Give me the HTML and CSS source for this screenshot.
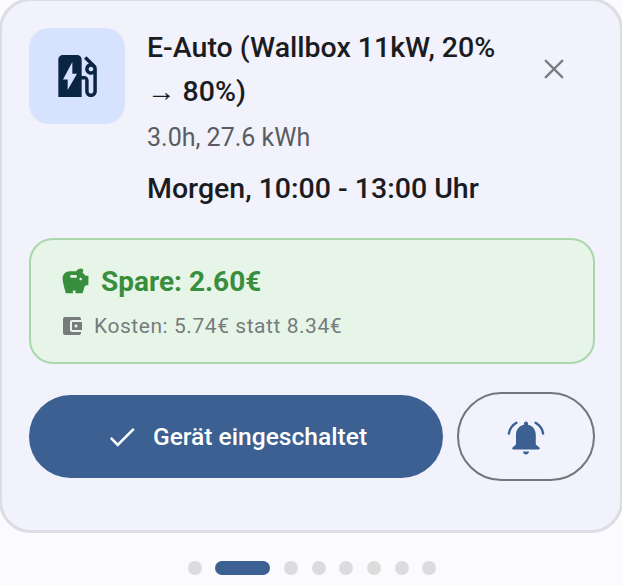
FILE: index.html
```html
<!DOCTYPE html>
<html>
  <head>
    <title>Tipp</title>
    <link rel="stylesheet" href="styles.css">
  </head>

  <body>
    <div class="card">
      <div class="top-row">
        <div class="device-icon">
          <svg viewBox="0 0 24 24" width="56" height="56"><path d="M19.77 7.23l.01-.01-3.72-3.72L15 4.56l2.11 2.11c-.94.36-1.61 1.26-1.61 2.33 0 1.38 1.12 2.5 2.5 2.5.36 0 .69-.08 1-.21v7.21c0 .55-.45 1-1 1s-1-.45-1-1V14c0-1.1-.9-2-2-2h-1V5c0-1.1-.9-2-2-2H6c-1.1 0-2 .9-2 2v16h10v-7.5h1.5v5c0 1.38 1.12 2.5 2.5 2.5s2.5-1.12 2.5-2.5V9c0-.69-.28-1.32-.73-1.77zM18 10c-.55 0-1-.45-1-1s.45-1 1-1 1 .45 1 1-.45 1-1 1zM8 18v-4.5H6L10 6v5h2l-4 7z"/></svg>
        </div>
        <div class="device-text">
          <div class="title">E-Auto (Wallbox 11kW, 20% → 80%)</div>
          <div class="sub">3.0h, 27.6 kWh</div>
          <div class="time">Morgen, 10:00 - 13:00 Uhr</div>
        </div>
        <svg class="close" viewBox="0 0 24 24" width="34" height="34"><path d="M5.7 5.7L18.3 18.3M18.3 5.7L5.7 18.3"/></svg>
      </div>

      <div class="savings">
        <div class="savings-main">
          <svg viewBox="0 0 24 24" width="31" height="31"><path fill-rule="evenodd" d="M15 10c0-.55.45-1 1-1s1 .45 1 1-.45 1-1 1-1-.45-1-1zM8 9h5V7H8v2zm14-1.5v6.97l-2.82.94L17.5 21H12v-2h-2v2H4.5S2 12.54 2 9.5 4.46 4 7.5 4h5c.91-1.21 2.36-2 4-2 .83 0 1.5.67 1.5 1.5 0 .21-.04.4-.12.58-.14.34-.26.73-.32 1.15L19.83 7.5H22z"/></svg>
          <span>Spare: 2.60€</span>
        </div>
        <div class="savings-cost">
          <svg viewBox="0 0 24 24" width="24" height="24"><path d="M21 18v1c0 1.1-.9 2-2 2H5c-1.11 0-2-.9-2-2V5c0-1.1.89-2 2-2h14c1.1 0 2 .9 2 2v1h-9c-1.11 0-2 .9-2 2v8c0 1.1.89 2 2 2h9zm-9-2h10V8H12v8zm4-2.5c-.83 0-1.5-.67-1.5-1.5s.67-1.5 1.5-1.5 1.5.67 1.5 1.5-.67 1.5-1.5 1.5z"/></svg>
          <span>Kosten: 5.74€ statt 8.34€</span>
        </div>
      </div>

      <div class="actions">
        <button class="btn-main">
          <svg viewBox="0 0 24 24" width="34" height="34"><path d="M4.1 12.7L9 17.6L20.3 6.3"/></svg>
          Gerät eingeschaltet
        </button>
        <button class="btn-bell">
          <svg viewBox="0 0 42 42" width="42" height="42">
            <path d="M21 5.5c1.1 0 2 .9 2 2v1.2c4.8 1 7.8 5 7.8 10.3v9.5l3.6 2.9c.8.7.4 2.1-.8 2.1H8.4c-1.2 0-1.6-1.4-.8-2.1l3.4-2.9V19c0-5.3 3-9.3 8-10.3V7.5c0-1.1.9-2 2-2zM18 35.6h6c0 1.6-1.3 2.9-3 2.9s-3-1.3-3-2.9z"/>
            <path class="bell-arc" d="M3.9 17.6C4.6 13 7.3 9.2 11.4 6.8M38.1 17.6C37.4 13 34.7 9.2 30.6 6.8"/>
          </svg>
        </button>
      </div>
    </div>

    <div class="dots">
      <span class="dot"></span>
      <span class="dot active"></span>
      <span class="dot"></span>
      <span class="dot"></span>
      <span class="dot"></span>
      <span class="dot"></span>
      <span class="dot"></span>
      <span class="dot"></span>
    </div>
  </body>
</html>
```

FILE: styles.css
```css
body {
  margin: 0;
  height: 586px;
  overflow: hidden;
  background: #fbfaff;
  font-family: Roboto, "Liberation Sans", sans-serif;
  color: #1b1c22;
}

svg {
  display: block;
  flex-shrink: 0;
}

.card {
  box-sizing: border-box;
  height: 535px;
  margin: -2px -1px 0;
  padding: 27px 25px 0 27px;
  background: #f1f2fb;
  border: 3px solid #dcdde3;
  border-radius: 32px;
}

.top-row {
  display: flex;
  align-items: flex-start;
  height: 210px;
}

.device-icon {
  width: 96px;
  height: 96px;
  display: flex;
  align-items: center;
  justify-content: center;
  flex-shrink: 0;
  background: #d7e3fe;
  border-radius: 20px;
}

.device-icon path {
  fill: #0c2444;
}

.device-text {
  width: 370px;
  flex-shrink: 0;
  margin: -2px 0 0 22px;
}

.title {
  font-size: 28.5px;
  font-weight: 500;
  line-height: 44px;
}

.sub {
  margin-top: 7px;
  font-size: 25px;
  line-height: 34px;
  color: #5a5c62;
}

.time {
  margin-top: 17px;
  font-size: 28.5px;
  font-weight: 500;
  line-height: 34px;
}

.close {
  margin: 24px 0 0 20px;
}

.close path {
  fill: none;
  stroke: #7b7c82;
  stroke-width: 1.6;
}

.savings {
  box-sizing: border-box;
  height: 126px;
  padding: 25px 29px 0;
  background: #e7f5e9;
  border: 2.5px solid #a9d8ab;
  border-radius: 24px;
}

.savings-main {
  display: flex;
  align-items: center;
  gap: 10px;
  font-size: 28px;
  font-weight: 700;
  color: #388e3c;
}

.savings-main path {
  fill: #388e3c;
}

.savings-cost {
  display: flex;
  align-items: center;
  gap: 10px;
  margin-top: 16px;
  font-size: 21px;
  letter-spacing: 0.55px;
  color: #767c7c;
}

.savings-cost path {
  fill: #767c7c;
}

.actions {
  display: flex;
  align-items: center;
  gap: 14px;
  margin-top: 28px;
}

.btn-main {
  width: 414px;
  height: 83px;
  flex-shrink: 0;
  display: flex;
  align-items: center;
  justify-content: center;
  gap: 14px;
  background: #3c6092;
  border: none;
  border-radius: 42px;
  color: #fff;
  font-family: inherit;
  font-size: 24.6px;
  font-weight: 500;
}

.btn-main path {
  fill: none;
  stroke: #fff;
  stroke-width: 1.75;
}

.btn-bell {
  box-sizing: border-box;
  width: 138px;
  height: 89px;
  flex-shrink: 0;
  display: flex;
  align-items: center;
  justify-content: center;
  padding: 0;
  background: none;
  border: 2px solid #74757a;
  border-radius: 45px;
}

.btn-bell path {
  fill: #3c6092;
}

.btn-bell .bell-arc {
  fill: none;
  stroke: #3c6092;
  stroke-width: 2.4;
  stroke-linecap: round;
}

.dots {
  display: flex;
  justify-content: center;
  gap: 13.7px;
  margin-top: 28px;
  padding-left: 2px;
}

.dot {
  width: 14px;
  height: 14px;
  background: #dcdcdc;
  border-radius: 50%;
}

.dot.active {
  width: 55px;
  background: #3c6092;
  border-radius: 7px;
}
```
